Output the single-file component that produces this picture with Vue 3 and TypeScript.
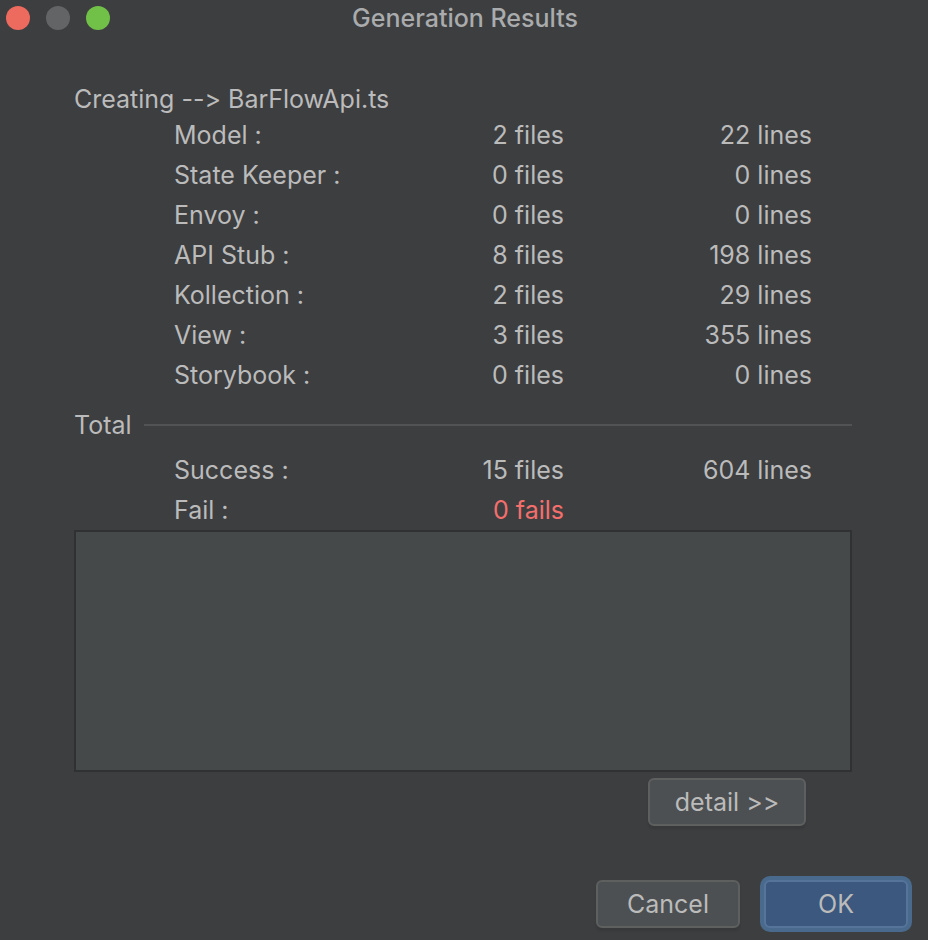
<script setup lang="ts">
interface ResultRow {
  label: string
  files: number
  lines: number
}

const rows: ResultRow[] = [
  { label: 'Model', files: 2, lines: 22 },
  { label: 'State Keeper', files: 0, lines: 0 },
  { label: 'Envoy', files: 0, lines: 0 },
  { label: 'API Stub', files: 8, lines: 198 },
  { label: 'Kollection', files: 2, lines: 29 },
  { label: 'View', files: 3, lines: 355 },
  { label: 'Storybook', files: 0, lines: 0 },
]
const success: ResultRow = { label: 'Success', files: 15, lines: 604 }
const fails = 0
</script>

<template>
  <main class="dialog">
    <header class="titlebar">
      <div class="lights">
        <button class="light close" aria-label="Close"></button>
        <button class="light minimize" aria-label="Minimize" disabled></button>
        <button class="light zoom" aria-label="Zoom"></button>
      </div>
      <h1 class="title">Generation Results</h1>
    </header>

    <section class="content">
      <p class="creating">Creating --&gt; BarFlowApi.ts</p>
      <table class="results">
        <tbody>
          <tr v-for="row in rows" :key="row.label">
            <th scope="row">{{ row.label }} :</th>
            <td class="files">{{ row.files }} files</td>
            <td class="lines">{{ row.lines }} lines</td>
          </tr>
        </tbody>
      </table>
      <h2 class="total">Total</h2>
      <table class="results">
        <tbody>
          <tr>
            <th scope="row">{{ success.label }} :</th>
            <td class="files">{{ success.files }} files</td>
            <td class="lines">{{ success.lines }} lines</td>
          </tr>
          <tr>
            <th scope="row">Fail :</th>
            <td class="files failed">{{ fails }} fails</td>
            <td class="lines"></td>
          </tr>
        </tbody>
      </table>
      <textarea class="log" aria-label="Log" readonly></textarea>
      <div class="detail-row">
        <button class="button detail">detail &gt;&gt;</button>
      </div>
    </section>

    <footer class="actions">
      <button class="button">Cancel</button>
      <button class="button primary">OK</button>
    </footer>
  </main>
</template>

<style>
body {
  background: #3d3e40;
}
</style>

<style scoped>
.dialog {
  display: flex;
  flex-direction: column;
  box-sizing: border-box;
  min-height: 100vh;
  padding-bottom: 8px;
  background: #3d3e40;
  color: #bbbbbb;
  font: 25px/40px Inter, sans-serif;
  font-variant-ligatures: no-contextual;
}
.titlebar {
  display: grid;
  grid-template-columns: 1fr auto 1fr;
  align-items: center;
  height: 36px;
  padding: 0 4px 0 6px;
}
.lights {
  display: flex;
  gap: 16px;
}
.light {
  width: 24px;
  height: 24px;
  padding: 0;
  border: 0;
  border-radius: 50%;
}
.close {
  background: #ed6a5e;
}
.minimize {
  background: #636466;
}
.zoom {
  background: #71c048;
}
.title {
  margin: 0;
  font-size: 25px;
  line-height: 36px;
  font-weight: 500;
  color: #a9abac;
}
.content {
  display: flex;
  flex-direction: column;
  padding: 47px 76px 0 74px;
}
.creating {
  margin: 0;
  line-height: 32px;
}
.results {
  width: 100%;
  table-layout: fixed;
  border-collapse: collapse;
}
th,
td {
  height: 40px;
  padding: 0;
  font-weight: 400;
  white-space: nowrap;
}
th {
  padding-left: 100px;
  text-align: left;
}
.files {
  width: 160px;
  text-align: right;
}
.lines {
  width: 288px;
  padding-right: 40px;
  box-sizing: border-box;
  text-align: right;
}
.failed {
  color: #f46f6c;
}
.total {
  display: flex;
  align-items: center;
  gap: 12px;
  margin: 10px 0 5px;
  font-size: 25px;
  font-weight: 400;
}
.total::after {
  content: '';
  flex: 1;
  height: 2px;
  background: #515355;
}
.log {
  display: block;
  box-sizing: border-box;
  width: 100%;
  height: 242px;
  border: 2px solid #2f3132;
  outline: 0;
  background: #45494a;
  color: inherit;
  font: inherit;
  resize: none;
}
.detail-row {
  display: flex;
  justify-content: flex-end;
  padding: 6px 46px 0 0;
}
.button {
  box-sizing: border-box;
  width: 144px;
  height: 48px;
  padding: 0;
  border: 2px solid #5e6060;
  border-radius: 6px;
  background: #4c5052;
  box-shadow: 0 3px 2px #38393b;
  color: #bbbbbb;
  font: inherit;
  line-height: 44px;
}
.detail {
  width: 158px;
}
.actions {
  display: flex;
  justify-content: flex-end;
  gap: 24px;
  margin-top: auto;
  padding: 24px 20px 4px;
}
.primary {
  border-color: #56749a;
  background: #3c587e;
  box-shadow: 0 0 0 4px #496a8d;
}
</style>
